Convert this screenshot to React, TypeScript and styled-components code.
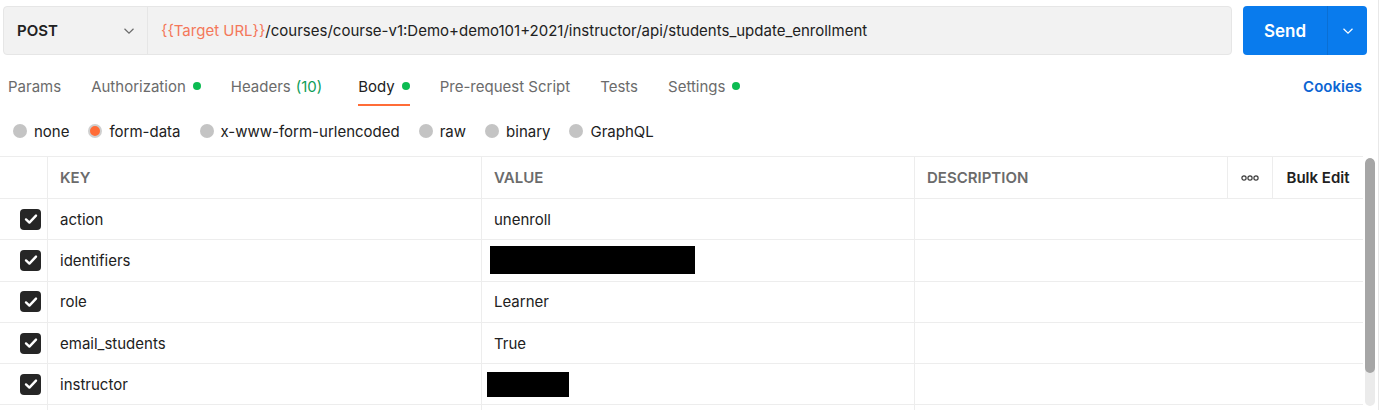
import React from 'react'
import styled, { createGlobalStyle } from 'styled-components'

const GlobalStyle = createGlobalStyle`
  html, body {
    margin: 0;
    padding: 0;
    background: #ffffff;
    font-family: Inter, "Noto Sans", "Liberation Sans", sans-serif;
    font-size: 15px;
    color: #212121;
    overflow: hidden;
  }
`

interface IRow {
  key: string
  value?: string
  redact?: { width: number; height: number; offset: number }
}

const rows: IRow[] = [
  { key: 'action', value: 'unenroll' },
  { key: 'identifiers', redact: { width: 205, height: 28, offset: 8 } },
  { key: 'role', value: 'Learner' },
  { key: 'email_students', value: 'True' },
  { key: 'instructor', redact: { width: 82, height: 25, offset: 5 } },
  { key: '' },
]

const tabs = [
  { label: 'Params' },
  { label: 'Authorization', dot: true },
  { label: 'Headers', count: '(10)' },
  { label: 'Body', dot: true, active: true },
  { label: 'Pre-request Script' },
  { label: 'Tests' },
  { label: 'Settings', dot: true },
]

const bodyTypes = ['none', 'form-data', 'x-www-form-urlencoded', 'raw', 'binary', 'GraphQL']

function Chevron(props: { color: string }) {
  return (
    <svg width="12" height="8" viewBox="0 0 12 8" fill="none">
      <path d="M1.5 1.8L6 6.2L10.5 1.8" stroke={props.color} strokeWidth="1.2" />
    </svg>
  )
}

function CheckBox() {
  return (
    <Check>
      <svg width="14" height="12" viewBox="0 0 14 12" fill="none">
        <path d="M2 6.4L5.4 9.6L12 2.6" stroke="#ffffff" strokeWidth="2.4" strokeLinecap="round" strokeLinejoin="round" />
      </svg>
    </Check>
  )
}

export default function App() {
  return (
    <Page>
      <GlobalStyle />

      <UrlBar>
        <UrlField>
          <Method>
            <span>POST</span>
            <Chevron color="#6b6b6b" />
          </Method>
          <Url>
            <span className={'variable'}>{'{{Target URL}}'}</span>
            /courses/course-v1:Demo+demo101+2021/instructor/api/students_update_enrollment
          </Url>
        </UrlField>

        <SendButton>
          <div className={'label'}>Send</div>
          <div className={'arrow'}><Chevron color="#ffffff" /></div>
        </SendButton>
      </UrlBar>

      <Tabs>
        {tabs.map(t => (
          <Tab key={t.label} active={!!t.active}>
            {t.label}
            {t.count && <span className={'count'}>{t.count}</span>}
            {t.dot && <Dot />}
          </Tab>
        ))}
        <Cookies>Cookies</Cookies>
      </Tabs>

      <Radios>
        {bodyTypes.map(b => (
          <RadioOption key={b}>
            <Radio selected={b === 'form-data'} />
            {b}
          </RadioOption>
        ))}
      </Radios>

      <TableArea>
        <Table>
          <HeaderRow>
            <CheckCell />
            <HeadCell>KEY</HeadCell>
            <HeadCell>VALUE</HeadCell>
            <HeadCell>DESCRIPTION</HeadCell>
            <MoreCell>
              <svg width="18" height="6" viewBox="0 0 18 6" fill="none">
                <circle cx="3" cy="3" r="2.1" stroke="#3c3c3c" strokeWidth="1.2" />
                <circle cx="9" cy="3" r="2.1" stroke="#3c3c3c" strokeWidth="1.2" />
                <circle cx="15" cy="3" r="2.1" stroke="#3c3c3c" strokeWidth="1.2" />
              </svg>
            </MoreCell>
            <BulkCell>Bulk Edit</BulkCell>
          </HeaderRow>

          {rows.map((r, i) => (
            <Row key={i}>
              <CheckCell>{r.key && <CheckBox />}</CheckCell>
              <Cell>{r.key}</Cell>
              <Cell>
                {r.value}
                {r.redact && (
                  <Redacted
                    style={{ width: r.redact.width, height: r.redact.height, marginLeft: r.redact.offset - 12 }}
                  />
                )}
              </Cell>
              <DescCell />
            </Row>
          ))}
        </Table>

        <ScrollTrack>
          <ScrollThumb />
        </ScrollTrack>
      </TableArea>
    </Page>
  )
}

const Page = styled.div`
  width: 1378px;
  height: 410px;
  border-right: 1px solid #e8e8e8;
  overflow: hidden;
`

const UrlBar = styled.div`
  display: flex;
  align-items: stretch;
  gap: 11px;
  padding: 6px 0 0 3px;
  height: 49px;
`

const UrlField = styled.div`
  display: flex;
  width: 1229px;
  background: #f2f2f2;
  border: 1px solid #e6e6e6;
  border-radius: 4px;
  box-sizing: border-box;
`

const Method = styled.div`
  display: flex;
  align-items: center;
  justify-content: space-between;
  width: 144px;
  box-sizing: border-box;
  padding: 0 12px 0 13px;
  border-right: 1px solid #e6e6e6;
  font-weight: 600;
  font-size: 15px;
  color: #212121;
`

const Url = styled.div`
  display: flex;
  align-items: center;
  padding-left: 13px;
  font-size: 15px;
  color: #212121;
  white-space: nowrap;

  .variable {
    color: #f4785a;
  }
`

const SendButton = styled.div`
  display: flex;
  width: 124px;
  background: #097bed;
  border-radius: 4px;
  color: #ffffff;

  .label {
    display: flex;
    align-items: center;
    justify-content: center;
    width: 84px;
    font-weight: 600;
    font-size: 17px;
    border-right: 1px solid #0a6fd4;
  }

  .arrow {
    display: flex;
    align-items: center;
    justify-content: center;
    flex: 1;
  }
`

const Tabs = styled.div`
  display: flex;
  align-items: stretch;
  gap: 30px;
  height: 38px;
  margin-top: 13px;
  padding: 0 16px 0 8px;
`

const Tab = styled.div<{ active: boolean }>`
  display: flex;
  align-items: center;
  font-size: 15px;
  color: ${p => (p.active ? '#212121' : '#6b6b6b')};
  border-bottom: 2px solid ${p => (p.active ? '#ff6c37' : 'transparent')};
  box-sizing: border-box;

  .count {
    color: #0f9d58;
    margin-left: 5px;
    margin-right: 6px;
  }
`

const Dot = styled.span`
  width: 8px;
  height: 8px;
  border-radius: 50%;
  background: #0cbb52;
  margin-left: 7px;
`

const Cookies = styled.div`
  display: flex;
  align-items: center;
  margin-left: auto;
  color: #0b65d3;
  font-weight: 600;
  font-size: 15px;
  padding-bottom: 2px;
`

const Radios = styled.div`
  display: flex;
  align-items: center;
  gap: 19px;
  height: 50px;
  padding-left: 13px;
`

const RadioOption = styled.div`
  display: flex;
  align-items: center;
  gap: 7px;
  font-size: 15px;
  color: #212121;
`

const Radio = styled.span<{ selected: boolean }>`
  width: 14px;
  height: 14px;
  border-radius: 50%;
  box-sizing: border-box;
  background: ${p => (p.selected ? '#ff6c37' : '#c4c4c4')};
  border: ${p => (p.selected ? '2px solid #cfcfcf' : 'none')};
`

const TableArea = styled.div`
  display: flex;
`

const Table = styled.div`
  width: 1363px;
  border-top: 1px solid #ededed;
`

const HeaderRow = styled.div`
  display: grid;
  grid-template-columns: 48px 434px 433px 313px 45px 90px;
  height: 42px;
  border-bottom: 1px solid #ededed;
  box-sizing: border-box;
`

const Row = styled.div`
  display: grid;
  grid-template-columns: 48px 434px 433px 448px;
  height: 41.3px;
  border-bottom: 1px solid #ededed;
  box-sizing: border-box;
`

const CheckCell = styled.div`
  display: flex;
  align-items: center;
  justify-content: flex-end;
  padding-right: 6px;
  border-right: 1px solid #ededed;
`

const HeadCell = styled.div`
  display: flex;
  align-items: center;
  padding-left: 12px;
  font-weight: 600;
  font-size: 15px;
  color: #6b6b6b;
  border-right: 1px solid #ededed;
`

const MoreCell = styled.div`
  display: flex;
  align-items: center;
  justify-content: center;
  border-right: 1px solid #ededed;
`

const BulkCell = styled.div`
  display: flex;
  align-items: center;
  justify-content: center;
  font-weight: 600;
  font-size: 15px;
  color: #212121;
`

const Cell = styled.div`
  display: flex;
  align-items: center;
  padding-left: 12px;
  font-size: 15px;
  color: #212121;
  border-right: 1px solid #ededed;
`

const DescCell = styled.div``

const Check = styled.div`
  display: flex;
  align-items: center;
  justify-content: center;
  width: 21px;
  height: 21px;
  border-radius: 4px;
  background: #262626;
`

const Redacted = styled.div`
  background: #000000;
`

const ScrollTrack = styled.div`
  width: 10px;
  height: 248px;
  margin: 2px 0 0 2px;
  border-radius: 5px;
  background: #ebebeb;
  overflow: hidden;
`

const ScrollThumb = styled.div`
  height: 215px;
  border-radius: 5px;
  background: #a6a6a6;
`
